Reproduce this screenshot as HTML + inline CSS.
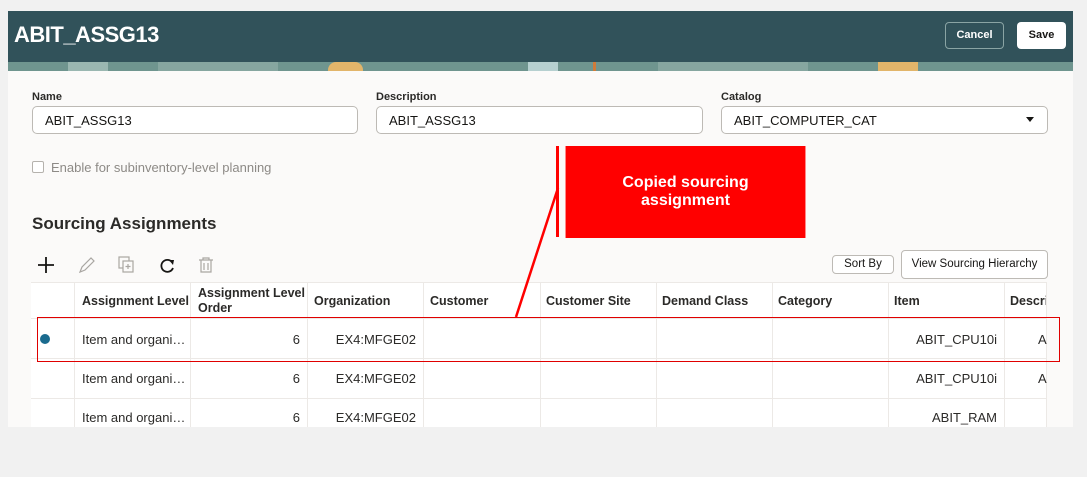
<!DOCTYPE html>
<html><head><meta charset="utf-8"><style>
*{box-sizing:border-box;margin:0;padding:0}
body{width:1087px;height:477px;background:#f1f1f1;font-family:"Liberation Sans",sans-serif;position:relative;overflow:hidden;color:#161513}
.a{position:absolute}
.hdr{left:8px;top:11px;width:1065px;height:51px;background:#31525a}
.ban{left:8px;top:62px;width:1065px;height:9px;background:#6f958f;overflow:hidden}
.panel{left:8px;top:71px;width:1065px;height:356px;background:#fbfaf9}
.lbl{font-size:11px;font-weight:bold;color:#2b2a28}
.inp{height:28px;background:#fff;border:1px solid #bdbab5;border-radius:5px;font-size:13px;padding:6px 12px}
.btn{border-radius:4px;font-size:11px;text-align:center}
.th{font-size:12.5px;font-weight:bold;color:#2b2a28}
.td{font-size:13px;color:#2b2a28}
.vl{top:282px;width:1px;height:145px;background:#ece9e6}
.hl{left:31px;width:1016px;height:1px;background:#ece9e6}
</style></head><body>
<div class="a hdr"></div>
<div class="a" style="left:14px;top:22px;font-size:22px;font-weight:bold;color:#fff;letter-spacing:-0.5px">ABIT_ASSG13</div>
<div class="a btn" style="left:945px;top:22px;width:59px;height:27px;border:1px solid #8aa4a4;color:#fff;line-height:25px;font-weight:bold">Cancel</div>
<div class="a btn" style="left:1017px;top:22px;width:49px;height:27px;background:#fff;color:#161513;line-height:27px;font-weight:bold">Save</div>
<div class="a ban">
 <div class="a" style="left:60px;top:0;width:40px;height:9px;background:#9ab7b1"></div>
 <div class="a" style="left:150px;top:0;width:120px;height:9px;background:#86a6a0"></div>
 <div class="a" style="left:320px;top:0;width:35px;height:9px;background:#e2b56a;border-radius:8px 8px 0 0"></div>
 <div class="a" style="left:520px;top:0;width:30px;height:9px;background:#b6d0d0"></div>
 <div class="a" style="left:585px;top:0;width:3px;height:9px;background:#d07b3a"></div>
 <div class="a" style="left:650px;top:0;width:150px;height:9px;background:#86a6a0"></div>
 <div class="a" style="left:870px;top:0;width:40px;height:9px;background:#e2b56a"></div>
</div>
<div class="a panel"></div>

<div class="a lbl" style="left:32px;top:91px">Name</div>
<div class="a inp" style="left:32px;top:106px;width:326px">ABIT_ASSG13</div>
<div class="a lbl" style="left:376px;top:91px">Description</div>
<div class="a inp" style="left:376px;top:106px;width:327px">ABIT_ASSG13</div>
<div class="a lbl" style="left:721px;top:91px">Catalog</div>
<div class="a inp" style="left:721px;top:106px;width:327px">ABIT_COMPUTER_CAT</div>
<div class="a" style="left:1026px;top:117px;width:0;height:0;border-left:4.5px solid transparent;border-right:4.5px solid transparent;border-top:5px solid #161513"></div>

<div class="a" style="left:32px;top:161px;width:12px;height:12px;border:1px solid #b5b2ad;border-radius:2px;background:#fff"></div>
<div class="a" style="left:51px;top:160px;font-size:13px;color:#8d8a86">Enable for subinventory-level planning</div>
<div class="a" style="left:32px;top:214px;font-size:17px;font-weight:bold;color:#2b2a28">Sourcing Assignments</div>

<svg class="a" style="left:36px;top:254px" width="190" height="22" viewBox="0 0 190 22">
 <path d="M10 3v16M2 11h16" stroke="#161513" stroke-width="1.8" fill="none"/>
 <path d="M44 18l2-5 9-9 3 3-9 9z" stroke="#a9a6a2" stroke-width="1.2" fill="none"/>
 <rect x="83" y="3" width="10" height="11" stroke="#a9a6a2" fill="none" stroke-width="1.2"/>
 <rect x="87" y="7" width="10" height="11" stroke="#a9a6a2" fill="#fbfaf9" stroke-width="1.2"/>
 <path d="M92 10v5M89.5 12.5h5" stroke="#a9a6a2" stroke-width="1.2"/>
 <path d="M136 8a6 6 0 1 0 1 6" stroke="#161513" stroke-width="1.8" fill="none"/>
 <path d="M133 6l5 0-1 5z" fill="#161513"/>
 <path d="M163 6h14M167 6v-2h6v2M165 6v12h10V6M168 9v7M172 9v7" stroke="#a9a6a2" stroke-width="1.2" fill="none"/>
</svg>

<div class="a btn" style="left:832px;top:255px;width:62px;height:19px;border:1px solid #bdbab5;background:#fff;line-height:17px;font-size:11.5px">Sort By</div>
<div class="a btn" style="left:901px;top:250px;width:147px;height:29px;border:1px solid #bdbab5;background:#fff;line-height:27px;font-size:11.5px">View Sourcing Hierarchy</div>

<div class="a" style="left:31px;top:282px;width:1016px;height:145px;background:#fff"></div>
<div class="a hl" style="top:282px"></div>
<div class="a hl" style="top:318px"></div>
<div class="a hl" style="top:358px"></div>
<div class="a hl" style="top:398px"></div>
<div class="a vl" style="left:74px"></div><div class="a vl" style="left:190px"></div><div class="a vl" style="left:307px"></div><div class="a vl" style="left:423px"></div><div class="a vl" style="left:540px"></div><div class="a vl" style="left:656px"></div><div class="a vl" style="left:772px"></div><div class="a vl" style="left:888px"></div><div class="a vl" style="left:1004px"></div>
<div class="a vl" style="left:1046px"></div>

<div class="a th" style="left:82px;top:294px">Assignment Level</div>
<div class="a th" style="left:198px;top:286px;line-height:15px">Assignment Level<br>Order</div>
<div class="a th" style="left:314px;top:294px">Organization</div>
<div class="a th" style="left:430px;top:294px">Customer</div>
<div class="a th" style="left:546px;top:294px">Customer Site</div>
<div class="a th" style="left:662px;top:294px">Demand Class</div>
<div class="a th" style="left:778px;top:294px">Category</div>
<div class="a th" style="left:894px;top:294px">Item</div>
<div class="a th" style="left:1010px;top:294px;width:36px;overflow:hidden;white-space:nowrap">Description</div>

<div class="a" style="left:40px;top:334px;width:10px;height:10px;border-radius:50%;background:#1a6b8e"></div>

<div class="a td" style="left:82px;top:332px">Item and organi…</div>
<div class="a td" style="left:82px;top:371px">Item and organi…</div>
<div class="a td" style="left:82px;top:410px">Item and organi…</div>
<div class="a td" style="left:190px;width:110px;text-align:right;top:332px">6</div>
<div class="a td" style="left:190px;width:110px;text-align:right;top:371px">6</div>
<div class="a td" style="left:190px;width:110px;text-align:right;top:410px">6</div>
<div class="a td" style="left:307px;width:109px;text-align:right;top:332px">EX4:MFGE02</div>
<div class="a td" style="left:307px;width:109px;text-align:right;top:371px">EX4:MFGE02</div>
<div class="a td" style="left:307px;width:109px;text-align:right;top:410px">EX4:MFGE02</div>
<div class="a td" style="left:888px;width:109px;text-align:right;top:332px">ABIT_CPU10i</div>
<div class="a td" style="left:888px;width:109px;text-align:right;top:371px">ABIT_CPU10i</div>
<div class="a td" style="left:888px;width:109px;text-align:right;top:410px">ABIT_RAM</div>
<div class="a td" style="left:1038px;top:332px">A</div>
<div class="a td" style="left:1038px;top:371px">A</div>

<div class="a" style="left:37px;top:317px;width:1023px;height:45px;box-shadow:inset 0 0 0 1px #e00000"></div>
<svg class="a" style="left:0;top:0" width="1087" height="477"><path d="M558 188L516 317" stroke="#f00" stroke-width="2.5"/></svg>
<div class="a" style="left:556px;top:146px;width:3px;height:91px;background:#f00"></div>
<div class="a" style="left:565px;top:146px;width:241px;height:92px;background:#f00;color:#fff;font-weight:bold;font-size:16px;text-align:center;line-height:18px;padding-top:28px;border-left:1px solid #f88;border-right:1px solid #f88">Copied sourcing<br>assignment</div>
</body></html>
